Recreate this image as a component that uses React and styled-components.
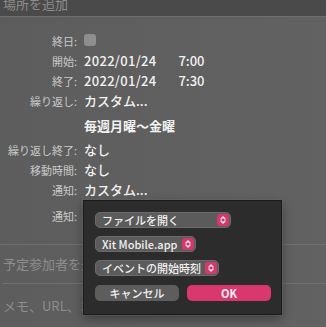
import React from 'react';
import styled, {createGlobalStyle} from 'styled-components';

const Global = createGlobalStyle`
    html, body {
        margin:0;
        padding:0;
        background:#5f5f5f;
    }
    body {
        font-family:"Noto Sans CJK JP", "Noto Sans", sans-serif;
        -webkit-font-smoothing:antialiased;
    }
`;

const Window = styled.div`
    position:relative;
    width:326px;
    height:327px;
    overflow:hidden;
    background:linear-gradient(90deg, #5d5d5d, #626262);
    display:flex;
    flex-direction:column;
`;

const Header = styled.div`
    height:16px;
    background:#4a4a4a;
    border-bottom:1px solid #6e6e6e;
    overflow:hidden;
    display:flex;
    align-items:flex-end;
    padding-left:3px;
`;

const Placeholder = styled.div`
    font-size:13px;
    line-height:16px;
    color:#8d8d8d;
    margin-bottom:${p => p.cut ? '4px' : '0'};
    white-space:nowrap;
`;

const Form = styled.div`
    display:grid;
    grid-template-columns:77px 1fr;
    grid-auto-rows:min-content;
    column-gap:7px;
    padding-top:14px;
    height:228px;
    box-sizing:border-box;
`;

const Label = styled.div`
    height:${p => p.h || 20}px;
    display:flex;
    align-items:center;
    justify-content:flex-end;
    font-size:11px;
    color:#c9c9c9;
    white-space:nowrap;
`;

const Value = styled.div`
    height:${p => p.h || 20}px;
    display:flex;
    align-items:center;
    gap:22px;
    font-size:13px;
    font-weight:${p => p.bold ? 700 : 500};
    color:#f2f2f2;
    white-space:nowrap;
`;

const Date = styled.span`
    letter-spacing:0.3px;
`;

const Check = styled.div`
    width:12px;
    height:12px;
    border-radius:3px;
    background:#8e8e8e;
    margin-top:-2px;
`;

const Section = styled.div`
    height:${p => p.h}px;
    border-top:1px solid #707070;
    margin-left:${p => p.inset ? 3 : 0}px;
    box-sizing:border-box;
    display:flex;
    align-items:center;
    padding-left:${p => p.inset ? 0 : 3}px;
`;

const Popup = styled.div`
    position:absolute;
    left:83px;
    top:200px;
    width:199px;
    height:115px;
    box-sizing:border-box;
    background:#2c2c2c;
    border:1px solid #1b1b1b;
    box-shadow:0 0 0 1px rgba(120,120,120,0.25), 0 4px 10px rgba(0,0,0,0.35);
    padding:11px 11px 0 11px;
    display:flex;
    flex-direction:column;
    align-items:flex-start;
    gap:8px;
`;

const Select = styled.div`
    min-width:${p => p.w || 0}px;
    height:16px;
    box-sizing:border-box;
    background:#5b5b5b;
    border:1px solid #6a6a6a;
    border-radius:5px;
    display:flex;
    align-items:center;
    justify-content:space-between;
    gap:4px;
    padding:0 1px 0 6px;
    font-size:11px;
    font-weight:500;
    color:#f0f0f0;
    white-space:nowrap;
`;

const Stepper = styled.div`
    width:12px;
    height:12px;
    flex-shrink:0;
    border-radius:3px;
    background:#d6386e;
    display:flex;
    align-items:center;
    justify-content:center;
`;

const Buttons = styled.div`
    display:flex;
    gap:8px;
    margin-top:1px;
`;

const Button = styled.div`
    width:${p => p.w}px;
    height:16px;
    border-radius:5px;
    background:${p => p.primary ? '#d9386f' : '#5d5d5d'};
    display:flex;
    align-items:center;
    justify-content:center;
    font-size:11px;
    font-weight:${p => p.primary ? 700 : 500};
    color:#f2f2f2;
`;

function Arrows(){
    return(
        <svg width="8" height="10" viewBox="0 0 8 10">
            <path d="M2 4 L4 2 L6 4 M2 6 L4 8 L6 6" stroke="#fff" strokeWidth="1.2" fill="none" strokeLinecap="round" strokeLinejoin="round"/>
        </svg>
    );
}

function PopSelect({w, children}){
    return(
        <Select w={w}>
            <span>{children}</span>
            <Stepper><Arrows/></Stepper>
        </Select>
    );
}

export default function App(){
    return(
        <Window>
            <Global/>
            <Header><Placeholder cut>場所を追加</Placeholder></Header>
            <Form>
                <Label>終日:</Label><Value><Check/></Value>
                <Label>開始:</Label><Value><Date>2022/01/24</Date><span>7:00</span></Value>
                <Label>終了:</Label><Value><Date>2022/01/24</Date><span>7:30</span></Value>
                <Label>繰り返し:</Label><Value>カスタム...</Value>
                <Label h={30}></Label><Value h={30} bold>毎週月曜〜金曜</Value>
                <Label h={18}>繰り返し終了:</Label><Value h={18}>なし</Value>
                <Label h={22}>移動時間:</Label><Value h={22}>なし</Value>
                <Label h={18}>通知:</Label><Value h={18}>カスタム...</Value>
                <Label h={34}>通知:</Label><Value h={34}></Value>
            </Form>
            <Section h={40}><Placeholder>予定参加者を追加</Placeholder></Section>
            <Section h={44} inset><Placeholder>メモ、URL、または添付ファイルを追加</Placeholder></Section>
            <Popup>
                <PopSelect w={136}>ファイルを開く</PopSelect>
                <PopSelect>Xit Mobile.app</PopSelect>
                <PopSelect>イベントの開始時刻</PopSelect>
                <Buttons>
                    <Button w={84}>キャンセル</Button>
                    <Button w={84} primary>OK</Button>
                </Buttons>
            </Popup>
        </Window>
    );
}
